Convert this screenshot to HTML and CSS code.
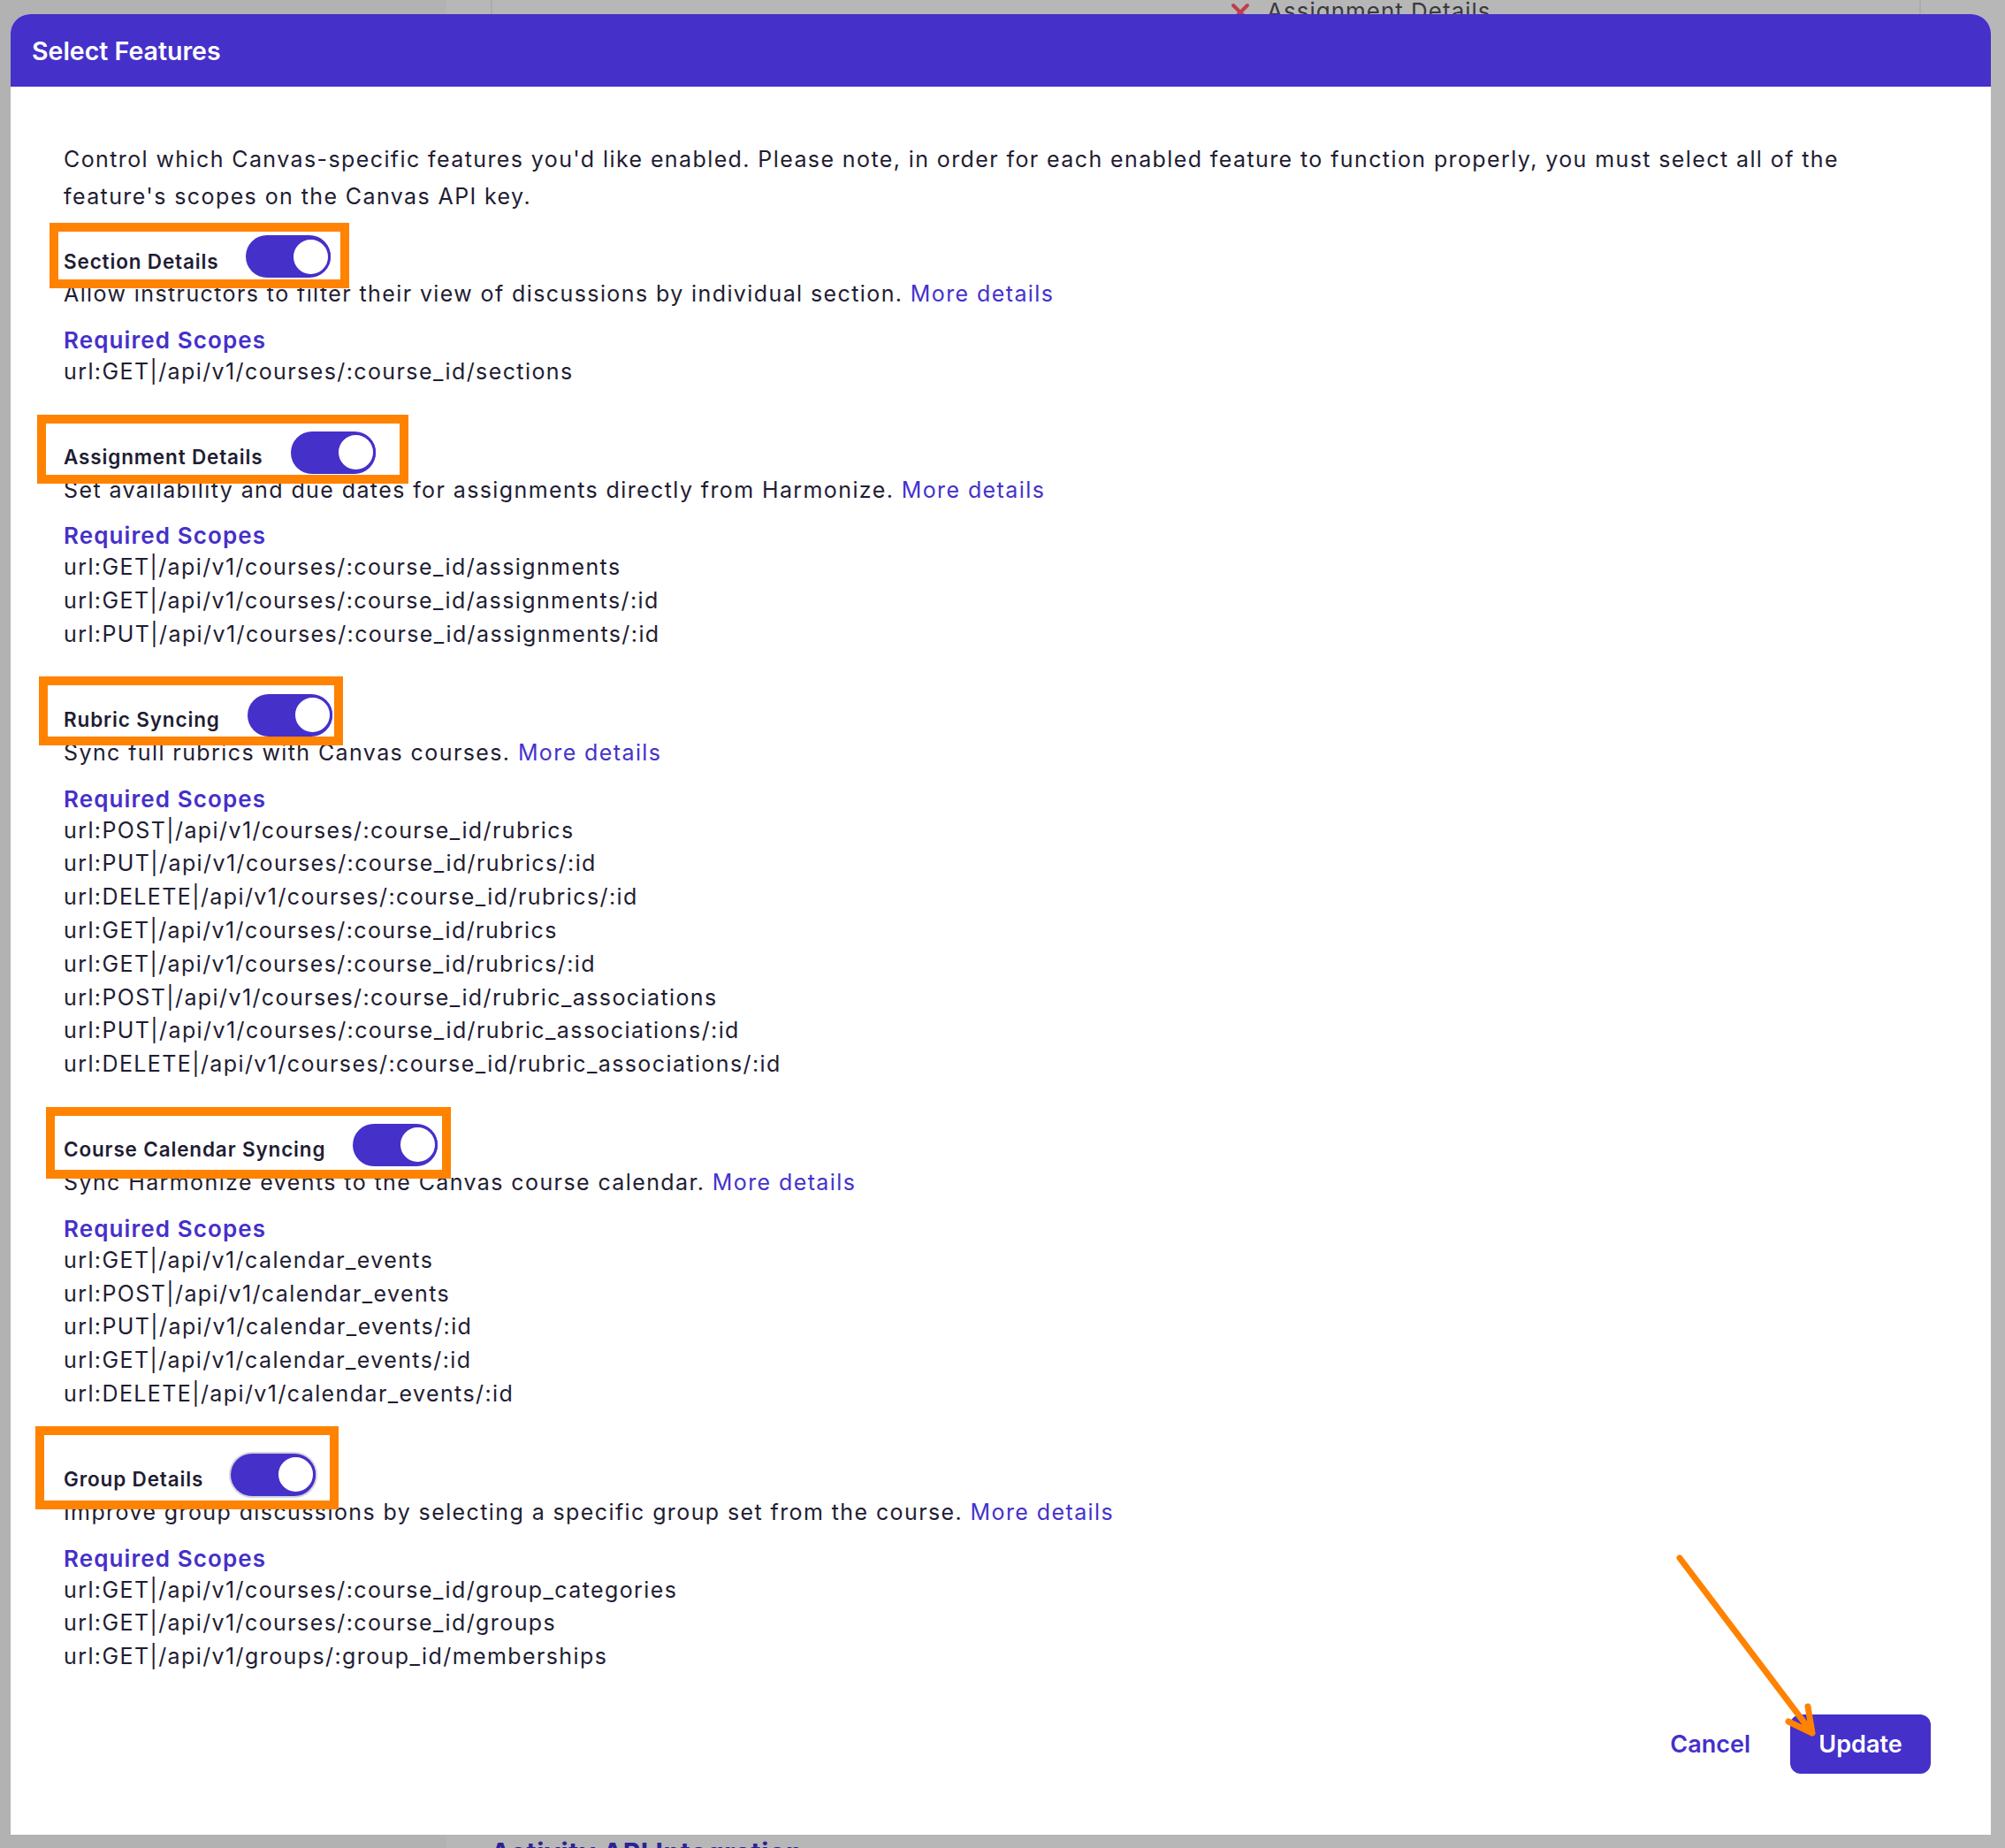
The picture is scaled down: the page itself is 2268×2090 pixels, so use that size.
FILE: index.html
```html
<!DOCTYPE html>
<html lang="en">
<head>
  <meta charset="UTF-8" />
  <meta name="viewport" content="width=device-width, initial-scale=1.0"/>
  <title>Select Features</title>
  <link rel="stylesheet" href="styles.css">
</head>
<body>

  <!-- page behind the dialog -->
  <div class="backdrop">
    <aside class="sidebar"></aside>
    <main class="content">
      <div class="content-card">
        <div class="status-row">
          <svg class="status-x" viewBox="0 0 24 24"><path d="M4 4 L20 20 M20 4 L4 20"/></svg>
          <span>Assignment Details</span>
        </div>
      </div>
      <h2 class="content-heading">Activity API Integration</h2>
    </main>
  </div>

  <!-- Select Features dialog -->
  <div class="modal">
    <header class="modal-header">
      <h1>Select Features</h1>
    </header>

    <div class="modal-body">
      <p class="intro">Control which Canvas-specific features you'd like enabled. Please note, in order for each enabled feature to function properly, you must select all of the feature's scopes on the Canvas API key.</p>

      <!-- Section Details -->
      <section class="feature">
        <div class="feature-head">
          <span class="feature-name">Section Details</span>
          <span class="toggle"><span class="knob"></span></span>
          <span class="mark mark-1"></span>
        </div>
        <p class="feature-desc">Allow instructors to filter their view of discussions by individual section. <a href="#">More details</a></p>
        <h4 class="scopes-title">Required Scopes</h4>
        <ul class="scopes">
          <li>url:GET|/api/v1/courses/:course_id/sections</li>
        </ul>
      </section>

      <!-- Assignment Details -->
      <section class="feature">
        <div class="feature-head">
          <span class="feature-name">Assignment Details</span>
          <span class="toggle"><span class="knob"></span></span>
          <span class="mark mark-2"></span>
        </div>
        <p class="feature-desc">Set availability and due dates for assignments directly from Harmonize. <a href="#">More details</a></p>
        <h4 class="scopes-title">Required Scopes</h4>
        <ul class="scopes">
          <li>url:GET|/api/v1/courses/:course_id/assignments</li>
          <li>url:GET|/api/v1/courses/:course_id/assignments/:id</li>
          <li>url:PUT|/api/v1/courses/:course_id/assignments/:id</li>
        </ul>
      </section>

      <!-- Rubric Syncing -->
      <section class="feature">
        <div class="feature-head">
          <span class="feature-name">Rubric Syncing</span>
          <span class="toggle"><span class="knob"></span></span>
          <span class="mark mark-3"></span>
        </div>
        <p class="feature-desc">Sync full rubrics with Canvas courses. <a href="#">More details</a></p>
        <h4 class="scopes-title">Required Scopes</h4>
        <ul class="scopes">
          <li>url:POST|/api/v1/courses/:course_id/rubrics</li>
          <li>url:PUT|/api/v1/courses/:course_id/rubrics/:id</li>
          <li>url:DELETE|/api/v1/courses/:course_id/rubrics/:id</li>
          <li>url:GET|/api/v1/courses/:course_id/rubrics</li>
          <li>url:GET|/api/v1/courses/:course_id/rubrics/:id</li>
          <li>url:POST|/api/v1/courses/:course_id/rubric_associations</li>
          <li>url:PUT|/api/v1/courses/:course_id/rubric_associations/:id</li>
          <li>url:DELETE|/api/v1/courses/:course_id/rubric_associations/:id</li>
        </ul>
      </section>

      <!-- Course Calendar Syncing -->
      <section class="feature">
        <div class="feature-head">
          <span class="feature-name">Course Calendar Syncing</span>
          <span class="toggle"><span class="knob"></span></span>
          <span class="mark mark-4"></span>
        </div>
        <p class="feature-desc">Sync Harmonize events to the Canvas course calendar. <a href="#">More details</a></p>
        <h4 class="scopes-title">Required Scopes</h4>
        <ul class="scopes">
          <li>url:GET|/api/v1/calendar_events</li>
          <li>url:POST|/api/v1/calendar_events</li>
          <li>url:PUT|/api/v1/calendar_events/:id</li>
          <li>url:GET|/api/v1/calendar_events/:id</li>
          <li>url:DELETE|/api/v1/calendar_events/:id</li>
        </ul>
      </section>

      <!-- Group Details -->
      <section class="feature">
        <div class="feature-head">
          <span class="feature-name">Group Details</span>
          <span class="toggle focused"><span class="knob"></span></span>
          <span class="mark mark-5"></span>
        </div>
        <p class="feature-desc">Improve group discussions by selecting a specific group set from the course. <a href="#">More details</a></p>
        <h4 class="scopes-title">Required Scopes</h4>
        <ul class="scopes">
          <li>url:GET|/api/v1/courses/:course_id/group_categories</li>
          <li>url:GET|/api/v1/courses/:course_id/groups</li>
          <li>url:GET|/api/v1/groups/:group_id/memberships</li>
        </ul>
      </section>
    </div>

    <footer class="modal-footer">
      <button class="btn-cancel">Cancel</button>
      <button class="btn-update">Update</button>
    </footer>

    <!-- annotation arrow -->
    <svg class="arrow" viewBox="0 0 190 230" width="190" height="230">
      <path d="M18 16 L168 214 M163 184 L168 214 L141 201"/>
    </svg>
  </div>

</body>
</html>
```

FILE: styles.css
```css
body {
  margin: 0;
  font-family: Inter, "Noto Sans", sans-serif;
  background-color: #b3b3b3;
  color: #1f1d33;
  overflow: hidden;
}

/* page behind the dialog */
.backdrop {
  display: flex;
  height: 2090px;
}
.sidebar {
  width: 505px;
  background-color: #b2b2b2;
}
.content {
  flex: 1;
  display: flex;
  flex-direction: column;
  background-color: #b7b7b7;
}
.content-card {
  margin-left: 50px;
  width: 1614px;
  border-left: 2px solid #ababab;
  border-right: 2px solid #ababab;
  height: 40px;
}
.status-row {
  display: flex;
  align-items: flex-start;
  gap: 18px;
  padding-left: 834px;
  font-size: 26px;
  line-height: 1;
  letter-spacing: 1px;
  color: #3a3a3e;
}
.status-x {
  width: 24px;
  height: 24px;
  margin-top: 2px;
  stroke: #bf3d4c;
  stroke-width: 4;
  stroke-linecap: round;
  fill: none;
}
.content-heading {
  margin: auto 0 -20px 50px;
  font-size: 30px;
  line-height: 1;
  font-weight: 700;
  letter-spacing: 0.6px;
  color: #2c2292;
}

/* dialog */
.modal {
  position: fixed;
  left: 12px;
  top: 16px;
  width: 2240px;
  background: #fff;
  border-radius: 22px 22px 0 0;
}
.modal-header {
  height: 82px;
  display: flex;
  align-items: center;
  padding-left: 24px;
  background-color: #4530ca;
  border-radius: 22px 22px 0 0;
}
.modal-header h1 {
  margin: 0;
  font-size: 28.5px;
  font-weight: 600;
  color: #fff;
}
.modal-body {
  padding: 61px 60px 0;
  font-size: 25px;
  letter-spacing: 1.4px;
}
.intro {
  margin: 0;
  max-width: 2080px;
  line-height: 42px;
}

.feature {
  margin-top: 48px;
}
.feature:first-of-type {
  margin-top: 23px;
}
.feature-head {
  position: relative;
  display: flex;
  align-items: center;
  gap: 31px;
  height: 48px;
}
.feature-name {
  padding-top: 10px;
  font-size: 22.5px;
  font-weight: 600;
  letter-spacing: 0.85px;
}
.toggle {
  display: flex;
  justify-content: flex-end;
  align-items: center;
  width: 96px;
  height: 48px;
  border-radius: 24px;
  background-color: #4530ca;
}
.toggle.focused {
  box-shadow: 0 0 0 2px #d3d3db;
}
.knob {
  width: 45px;
  height: 45px;
  box-sizing: border-box;
  border-radius: 50%;
  border: 3px solid #4530ca;
  background: #fff;
}

/* orange annotation boxes */
.mark {
  position: absolute;
  box-sizing: border-box;
  border: 10px solid #ff8200;
}
.mark-1 { left: -16px; top: -14px; width: 339px; height: 74px; }
.mark-2 { left: -30px; top: -19px; width: 420px; height: 78px; }
.mark-3 { left: -28px; top: -20px; width: 344px; height: 78px; }
.mark-4 { left: -20px; top: -19px; width: 458px; height: 81px; }
.mark-5 { left: -32px; top: -31px; width: 343px; height: 94px; }

.feature-desc {
  margin: 0;
  line-height: 37.8px;
}
.feature-desc a {
  color: #4532cc;
  text-decoration: none;
}
.scopes-title {
  margin: 16px 0 0;
  font-size: 26px;
  line-height: 34px;
  font-weight: 600;
  letter-spacing: 1.1px;
  color: #4530ca;
}
.scopes {
  margin: 0;
  padding: 0;
  list-style: none;
  line-height: 37.8px;
}

.modal-footer {
  display: flex;
  justify-content: flex-end;
  align-items: center;
  gap: 45px;
  padding: 46px 68px 69px 60px;
}
.modal-footer button {
  font-family: inherit;
  font-size: 27px;
  font-weight: 600;
  border: none;
  cursor: pointer;
}
.btn-cancel {
  padding: 0;
  background: none;
  color: #4530ca;
}
.btn-update {
  width: 159px;
  height: 67px;
  border-radius: 12px;
  background-color: #4530ca;
  color: #fff;
}

.arrow {
  position: absolute;
  left: 1870px;
  top: 1730px;
  overflow: visible;
  fill: none;
  stroke: #ff8200;
  stroke-width: 7;
  stroke-linecap: round;
  stroke-linejoin: round;
}
```
